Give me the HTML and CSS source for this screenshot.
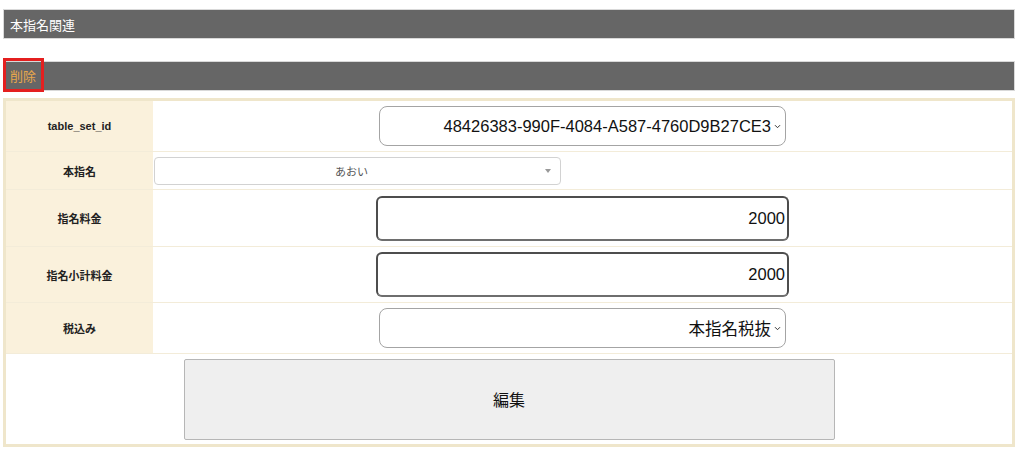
FILE: index.html
```html
<!DOCTYPE html>
<html lang="ja">
<head>
<meta charset="utf-8">
<title>本指名関連</title>
<link rel="stylesheet" href="styles.css">
</head>
<body>
<div class="page">
  <div class="bar">本指名関連</div>
  <div class="bar bar-del"><span class="del">削除</span></div>
  <div class="form">
    <div class="label">table_set_id</div>
    <div class="value">
      <div class="select"><span>48426383-990F-4084-A587-4760D9B27CE3</span><svg class="chev" width="7" height="5" viewBox="0 0 7 5"><path d="M1 1.2l2.5 2.5L6 1.2" fill="none" stroke="#333" stroke-width="1"/></svg></div>
    </div>
    <div class="label">本指名</div>
    <div class="value value-left">
      <div class="select2"><span class="s2-text">あおい</span><span class="s2-arrow"></span></div>
    </div>
    <div class="label">指名料金</div>
    <div class="value"><input class="num" type="text" value="2000"></div>
    <div class="label">指名小計料金</div>
    <div class="value"><input class="num" type="text" value="2000"></div>
    <div class="label">税込み</div>
    <div class="value">
      <div class="select"><span>本指名税抜</span><svg class="chev" width="7" height="5" viewBox="0 0 7 5"><path d="M1 1.2l2.5 2.5L6 1.2" fill="none" stroke="#333" stroke-width="1"/></svg></div>
    </div>
    <div class="action"><button class="btn" type="button">編集</button></div>
  </div>
</div>
</body>
</html>
```
FILE: styles.css
```css
* { box-sizing: border-box; }
html, body { margin: 0; padding: 0; background: #fff; }
body {
  font-family: "Liberation Sans", "Noto Sans CJK JP", sans-serif;
  color: #222;
}
.page {
  padding: 9px 0 0 3px;
  width: 1015px;
}
.bar {
  height: 30px;
  border: 1px solid #d9d9d9;
  background: #666;
  color: #fff;
  font-size: 13px;
  display: flex;
  align-items: center;
  padding-left: 6px;
}
.bar-del {
  margin-top: 22px;
  padding-left: 0;
  align-items: flex-start;
}
.del {
  display: flex;
  align-items: center;
  margin-top: -4px;
  margin-left: -1px;
  height: 34px;
  width: 41px;
  border: 3px solid #e41f1f;
  padding-left: 4px;
  color: #e8a74c;
  font-size: 13px;
}
.form {
  margin-top: 7px;
  width: 1012px;
  border: 3px solid #efe6cb;
  display: grid;
  grid-template-columns: 147px 1fr;
  grid-template-rows: 51px 38px 57px 56px 51px 90px;
}
.label, .value {
  border-bottom: 1px solid #f3ecd9;
}
.label {
  background: #faf1dc;
  font-size: 11px;
  font-weight: bold;
  display: flex;
  align-items: center;
  justify-content: center;
  color: #222;
}
.value {
  display: flex;
  align-items: center;
  justify-content: center;
  background: #fff;
}
.value-left {
  justify-content: flex-start;
  padding-left: 1px;
}
.select {
  width: 407px;
  height: 40px;
  border: 1px solid #a4a4a4;
  border-radius: 8px;
  display: flex;
  align-items: center;
  justify-content: flex-end;
  gap: 3px;
  padding-right: 4px;
  font-size: 16.5px;
  color: #111;
  background: #fff;
}
.chev { display: block; margin-top: 1px; }
.select2 {
  width: 407px;
  height: 28px;
  border: 1px solid #d2d2d2;
  border-radius: 4px;
  display: flex;
  align-items: center;
  padding-left: 8px;
  font-size: 11px;
  color: #555;
  background: #fff;
}
.s2-text {
  flex: 1;
  text-align: center;
}
.s2-arrow {
  width: 0;
  height: 0;
  margin: 1px 9px 0 5px;
  border-left: 3px solid transparent;
  border-right: 3px solid transparent;
  border-top: 4px solid #999;
}
.num {
  width: 413px;
  height: 45px;
  border: 2px solid #4d4d4d;
  border-bottom-color: #6e6e6e;
  border-radius: 6px;
  padding: 0 2px 0 6px;
  text-align: right;
  font-family: "Liberation Sans", sans-serif;
  font-size: 16.5px;
  color: #111;
  background: #fff;
  outline: none;
}
.action {
  grid-column: 1 / span 2;
  display: flex;
  align-items: center;
  justify-content: center;
  background: #fff;
}
.btn {
  width: 651px;
  height: 81px;
  background: #efefef;
  border: 1px solid #b6b6b6;
  border-radius: 2px;
  font-family: "Noto Sans CJK JP", sans-serif;
  font-size: 16px;
  color: #111;
  margin-left: 0;
}
```
